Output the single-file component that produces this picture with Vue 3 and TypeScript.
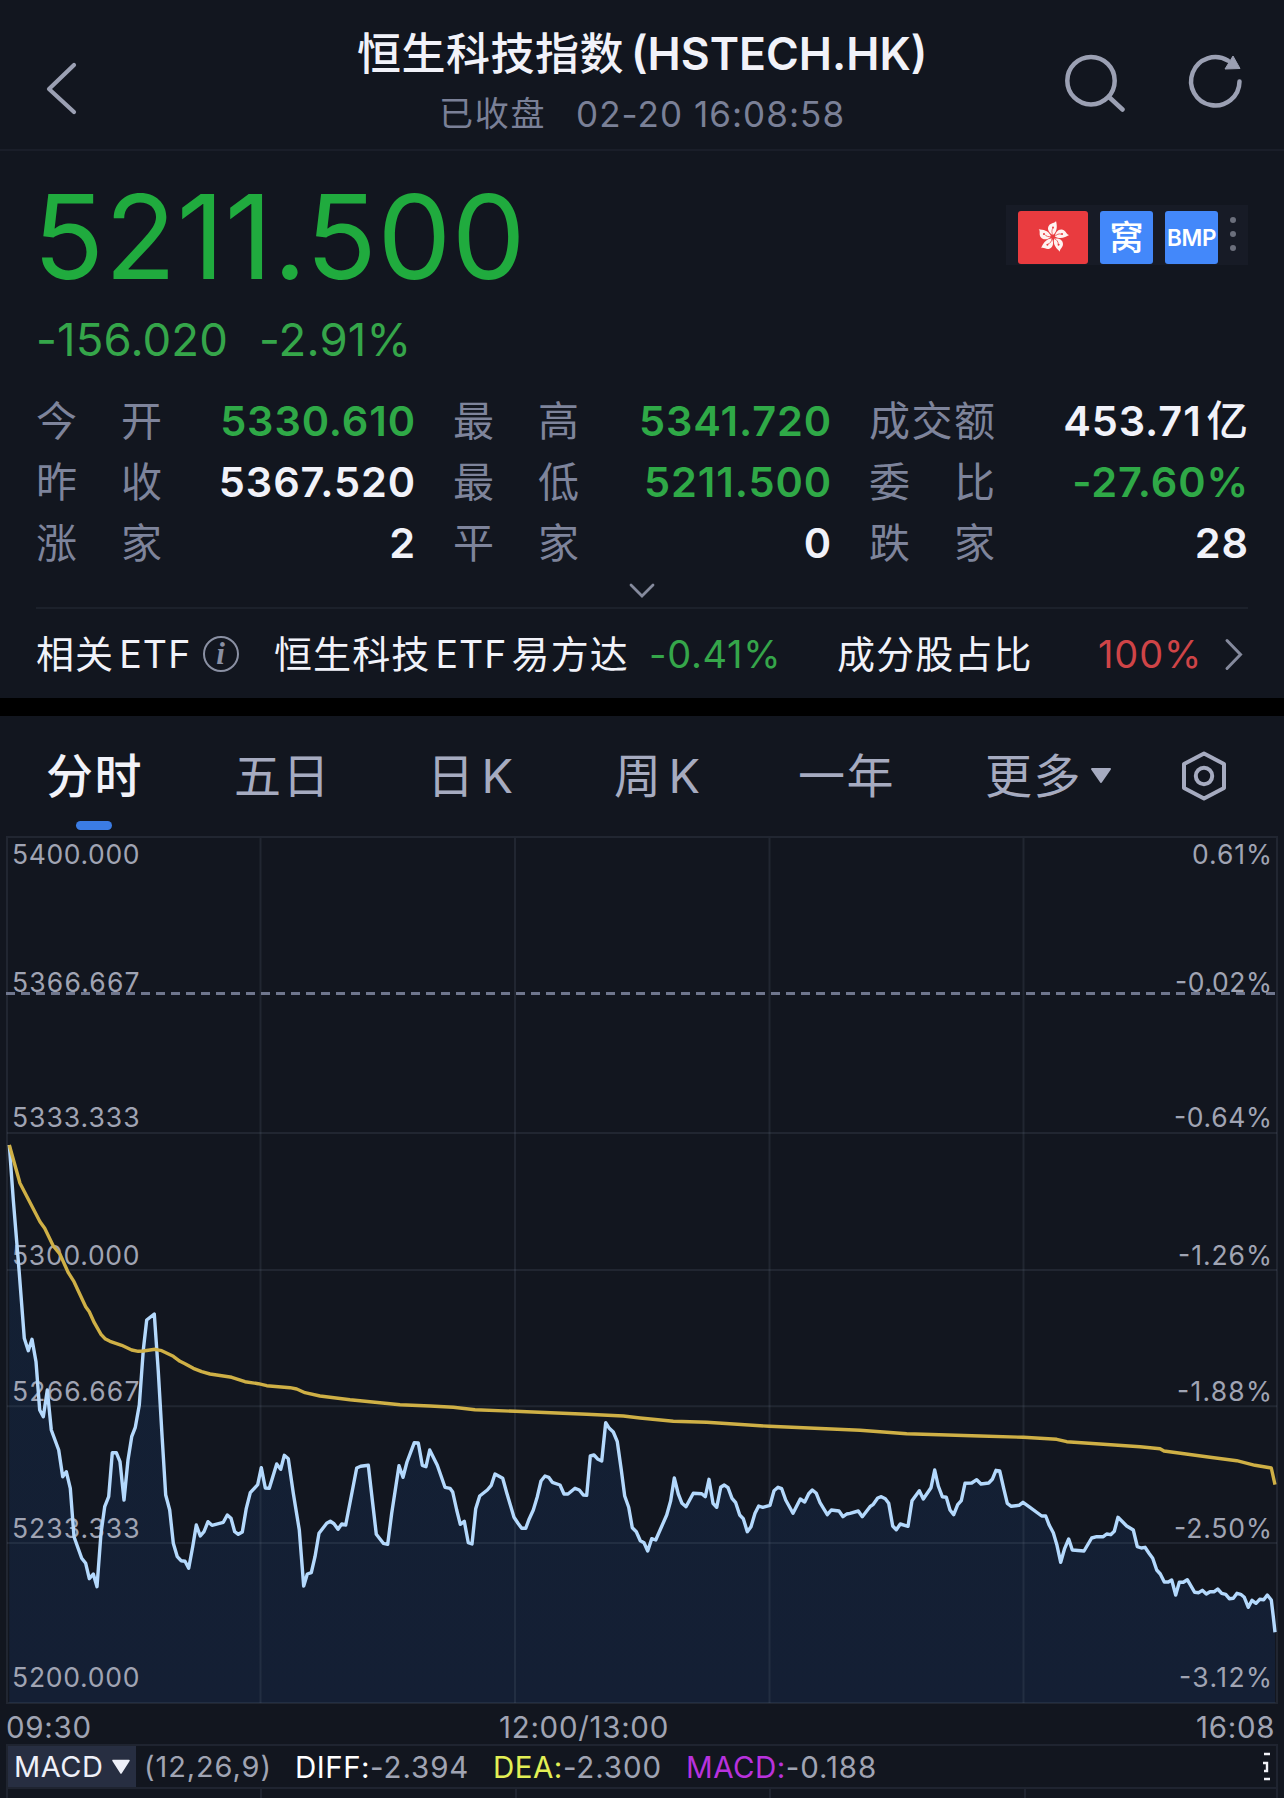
<script setup lang="ts">
interface Stat {
  label: string
  value: string
  unit?: string
  tone: 'down' | 'flat'
}

const stats: Stat[] = [
  { label: '今开', value: '5330.610', tone: 'down' },
  { label: '最高', value: '5341.720', tone: 'down' },
  { label: '成交额', value: '453.71', unit: '亿', tone: 'flat' },
  { label: '昨收', value: '5367.520', tone: 'flat' },
  { label: '最低', value: '5211.500', tone: 'down' },
  { label: '委比', value: '-27.60%', tone: 'down' },
  { label: '涨家', value: '2', tone: 'flat' },
  { label: '平家', value: '0', tone: 'flat' },
  { label: '跌家', value: '28', tone: 'flat' },
]

interface AxisLabel {
  y: number
  price: string
  percent: string
  percentWidth: number
}

const axis: AxisLabel[] = [
  { y: 864.3, price: '5400.000', percent: '0.61%', percentWidth: 80 },
  { y: 991.5, price: '5366.667', percent: '-0.02%', percentWidth: 97 },
  { y: 1127.3, price: '5333.333', percent: '-0.64%', percentWidth: 98 },
  { y: 1264.5, price: '5300.000', percent: '-1.26%', percentWidth: 94 },
  { y: 1400.5, price: '5266.667', percent: '-1.88%', percentWidth: 95 },
  { y: 1537.5, price: '5233.333', percent: '-2.50%', percentWidth: 98 },
  { y: 1687.3, price: '5200.000', percent: '-3.12%', percentWidth: 93 },
]

const columns: number[] = [260.5, 515, 769.5, 1023.5]
const rows: number[] = [1133, 1270, 1406.3, 1543]

const priceLine =
  '9.3,1145 13.3,1200 19.3,1273.3 24.3,1338.3 28.3,1350.7 32,1339.3 36,1361.7 39.7,1410 43.3,1416.7 47.3,1390 ' +
  '51.3,1430 58.7,1450 62.7,1476.7 66.3,1471.7 70.3,1488.3 74,1536.7 81.7,1558.3 85.7,1563.3 89.3,1578.7 93.3,1574 ' +
  '97,1586.7 101,1533.3 104.7,1506.7 108.7,1496.7 112.3,1452.7 116.3,1452.7 120,1461.7 124,1500 128,1460 131.7,1436.7 ' +
  '135.3,1427.3 139.3,1405 143.3,1350 146.7,1320 154.3,1314 158.3,1371.7 162,1435 165.7,1495 169.7,1510 173.3,1543.3 ' +
  '177.3,1556.7 181,1560.7 185,1561.3 188.7,1568.3 192.7,1546.7 196.3,1525 200.3,1536 204,1531.7 208,1521.7 212,1525.3 ' +
  '223.3,1522.3 227.3,1515 231,1518.3 234.7,1531.7 238.3,1534.3 242.3,1532 246.3,1508.3 250.3,1492.7 257.7,1484.7 ' +
  '261.3,1467.7 265.3,1488 269.3,1488.3 276.7,1464 280.7,1469.3 284.3,1455.3 288.3,1458.7 293.3,1493.3 299.3,1530 ' +
  '303.7,1586 307.3,1574 311.3,1572.7 315,1556.7 319,1533.3 326.7,1523.3 330.3,1521.3 334,1523.7 338,1529.3 341.7,1524 ' +
  '345.7,1525 356.7,1468 360.7,1466.3 368.3,1465.3 372.3,1500 376.3,1534.3 383.3,1543.3 387.7,1544.3 391.7,1513.3 ' +
  '399,1465.7 403,1477.3 407,1462 414.3,1442.7 418.3,1443 422.3,1465.3 426,1466.7 429.7,1450 437.3,1465.3 445,1487.3 ' +
  '450,1488.3 452.7,1492 456.7,1510 460.3,1524.3 464.3,1521.3 468.3,1542.7 472,1544 475.7,1508.7 479.7,1496 487.3,1490 ' +
  '491.3,1485.3 495,1474 502.7,1478.3 506.7,1492.7 514,1517.3 518,1523.3 521.7,1528.3 525.7,1528.3 529.3,1518.7 ' +
  '533.3,1510 537.3,1496.7 541,1481 545,1476 548.7,1477.3 552.3,1482.3 560,1485 564,1494 568,1494 575,1488.3 ' +
  '579.3,1490 583.3,1495 586.7,1495.3 590.3,1456 594,1455 598,1459.3 601.7,1461 605.7,1422.7 609.3,1428.3 613.3,1432 ' +
  '617.3,1441.7 621.3,1470 624.7,1496 628.7,1507.3 632.3,1527.7 636.3,1531.7 640.3,1540.7 644,1542.7 647.7,1551 ' +
  '651.7,1538.7 655.7,1540 666.7,1515 670.7,1500.7 674.3,1478 678.3,1494 682,1503.3 686,1506.7 693.3,1493.3 ' +
  '701.7,1493.7 705.3,1496.7 709,1479.3 713,1503.3 716.7,1507.3 720.7,1487.3 724.3,1485 728,1487.7 732,1498.3 ' +
  '735.7,1502.7 739.7,1515 743.3,1518.7 747.3,1531.7 751,1526.7 755,1513.3 758.7,1506 762.7,1507.3 770,1505.3 ' +
  '774,1490.7 778,1487.3 781.7,1488.7 785.7,1500 793,1513.3 800.3,1499 804.7,1502 808.7,1493.7 812.3,1490 816.3,1493.3 ' +
  '820,1502.7 827.3,1514.7 831.3,1510 839,1511 843,1516.7 846.7,1514 850,1513.3 858.3,1511 862.3,1516.7 870,1506.7 ' +
  '873.3,1504.3 877.7,1498 881.3,1496.7 885.3,1498.7 888.7,1503.3 892.7,1526 896.3,1529.7 900.3,1524 908,1526.3 ' +
  '912,1500.7 919.3,1490.7 923.3,1499 931,1487.7 934.7,1470 938.3,1486 942.3,1496.7 946.3,1497.3 950,1510 953.7,1514.7 ' +
  '957.7,1504.7 961.3,1500.7 965,1483.3 971.7,1483 976.7,1479.7 981,1484 988.7,1483 992.3,1479.3 996,1470.3 999.7,1471 ' +
  '1003.7,1488.3 1007.3,1503.3 1011.3,1506.3 1019,1505.3 1023,1502.3 1030,1507.3 1041.7,1516 1045.7,1516 1049.3,1525.3 ' +
  '1053.3,1532.7 1057,1545.3 1060.7,1562.3 1064.7,1548.3 1068.7,1539 1072.3,1550 1084,1551 1091.7,1538 1096.7,1536.7 ' +
  '1103.3,1536.7 1106.7,1534 1110.7,1534.7 1114.3,1531.3 1118,1517.3 1126.7,1526 1133.3,1530 1137.3,1546.7 1141.3,1548 ' +
  '1145,1547.3 1149,1553.3 1152.7,1558.3 1156.7,1570 1160.3,1574 1164.3,1582 1168.3,1582 1171.7,1580 1175.7,1595 ' +
  '1179.3,1582.3 1183.3,1582.3 1187.3,1579.7 1194.7,1592.3 1198.7,1592.7 1202.3,1590.3 1206.3,1594 1210,1591.7 ' +
  '1214.3,1591.7 1217.7,1589 1221.7,1593.3 1225.7,1594.3 1229.3,1598.7 1233.3,1598.3 1237,1593.3 1240.7,1594.3 ' +
  '1244.3,1597.3 1248.3,1607.3 1252,1600.3 1256,1603.3 1259.7,1599.3 1263.7,1599.7 1267.3,1595 1271.3,1600 ' +
  '1273.3,1616.7 1275,1632.3'

const averageLine =
  '9.3,1145 20,1183.3 40,1221.7 44.7,1228.3 53.3,1246 60,1254.3 68.3,1272.7 74,1281.7 85.7,1306.7 89.3,1311.7 ' +
  '94.3,1322.7 101,1334.3 105,1338.7 110,1341.3 121.7,1345.3 131.7,1350 138.3,1351.3 143.3,1351 155,1349.3 ' +
  '161.7,1350.7 173.3,1356.3 180,1361.3 185,1363.7 193.3,1368.3 201.7,1371.7 210,1374 231.7,1377.3 245,1381.7 ' +
  '258.3,1383.7 266.7,1385.7 290,1387.7 296.7,1389 305,1392.7 320,1396 350,1399.7 400,1404.7 430,1406 453.3,1407.3 ' +
  '475,1409.7 515,1411.3 586.7,1414.3 623.3,1416 640,1418 673.3,1421.3 706.7,1422.3 769.3,1426.3 860,1430.3 ' +
  '906.7,1433.7 980,1436 1023.3,1437.3 1056.7,1439.3 1066.7,1441.7 1140,1446.7 1160,1448.7 1164,1451 1210,1457.3 ' +
  '1236.7,1460.7 1255,1465.3 1271.3,1468 1275,1484.7'

const areaPoints = `${priceLine} 1275,1703 9.3,1703`
const petals: number[] = [0, 72, 144, 216, 288]
</script>

<template>
  <main class="app">
    <header class="topbar">
      <svg class="back" width="34" height="56" viewBox="0 0 34 56" fill="none">
        <path d="M29 4 4 28 29 51" stroke="#9ba0b3" stroke-width="4.200" stroke-linecap="round" stroke-linejoin="round" />
      </svg>
      <div class="heading">
        <h1><span class="name">恒生科技指数</span><span class="code">(HSTECH.HK)</span></h1>
        <p><span class="state">已收盘</span><span class="stamp">02-20 16:08:58</span></p>
      </div>
      <svg class="search" width="64" height="60" viewBox="1062 52 64 60" fill="none" stroke="#9ba0b3" stroke-width="4.500" stroke-linecap="round">
        <circle cx="1091" cy="80.700" r="23.700" />
        <path d="M1109 97l13.500 12.500" />
      </svg>
      <svg class="refresh" width="60" height="60" viewBox="1186 52 60 60" fill="none">
        <path d="M1239.500 81.500a24.200 24.200 0 1 1-11.500-20.800" stroke="#9ba0b3" stroke-width="4.500" stroke-linecap="round" />
        <path d="M1233 56l7 12.500-15 .5z" fill="#9ba0b3" stroke="#9ba0b3" stroke-linejoin="round" />
      </svg>
    </header>

    <section class="summary">
      <div class="quote">
        <div class="last">5211.500</div>
        <div class="badges">
          <span class="badge flag">
            <svg width="36" height="36" viewBox="-18 -18 36 36">
              <g v-for="angle in petals" :key="angle" :transform="`rotate(${angle})`">
                <path d="M0-2C-4-4-6.500-8-4-11.500-2-14.500 2-13.500 3-16 4-12 5-6 0-2Z" fill="#fff3f1" />
                <path d="M0-2C-1.500-4-1.500-7 0-9" stroke="#e93b3f" stroke-width=".7" fill="none" />
                <circle cx="0" cy="-9.500" r="1" fill="#e93b3f" />
              </g>
            </svg>
          </span>
          <span class="badge nest">窝</span>
          <span class="badge bmp">BMP</span>
          <span class="dots"><i></i><i></i><i></i></span>
        </div>
      </div>
      <div class="change"><span class="delta">-156.020</span><span class="rate">-2.91%</span></div>
      <dl class="stats">
        <div v-for="s in stats" :key="s.label" class="stat">
          <dt><span v-for="c in s.label" :key="c">{{ c }}</span></dt>
          <dd :class="s.tone">{{ s.value }}<span v-if="s.unit" class="unit">{{ s.unit }}</span></dd>
        </div>
      </dl>
      <div class="expand">
        <svg width="30" height="18" viewBox="0 0 30 18" fill="none"><path d="M4 3l11 11L26 3" stroke="#858a9d" stroke-width="2.800" stroke-linecap="round" /></svg>
      </div>
      <div class="etf">
        <span class="etf-title">相关<b>ETF</b></span>
        <span class="info">i</span>
        <span class="etf-name">恒生科技<b>ETF</b>易方达</span>
        <span class="etf-rate">-0.41%</span>
        <span class="share">成分股占比</span>
        <span class="share-rate">100%</span>
        <svg class="next" width="20" height="34" viewBox="0 0 20 34" fill="none"><path d="M3 3.500 16.500 17.500 3 31.500" stroke="#858a9d" stroke-width="3" stroke-linecap="round" /></svg>
      </div>
    </section>

    <nav class="tabs">
      <span class="tab active">分时</span>
      <span class="tab">五日</span>
      <span class="tab">日<b>K</b></span>
      <span class="tab">周<b>K</b></span>
      <span class="tab">一年</span>
      <span class="tab">更多</span>
      <svg class="caret" width="22" height="18" viewBox="0 0 22 18"><path d="M2 2h18L11 15z" fill="#a6abc0" stroke="#a6abc0" stroke-width="2" stroke-linejoin="round" /></svg>
      <svg class="settings" width="48" height="52" viewBox="-24 -26 48 52" fill="none" stroke="#a6abc0" stroke-width="4" stroke-linejoin="round">
        <path d="M0-22.500 20-12V12L0 22.500-20 12V-12z" />
        <circle r="8.200" />
      </svg>
    </nav>

    <svg class="chart" width="1284" height="874" viewBox="0 832 1284 874">
      <defs>
        <linearGradient id="area" x1="0" y1="0" x2="0" y2="1">
          <stop offset="0" stop-color="#132033" />
          <stop offset="1" stop-color="#141f34" />
        </linearGradient>
      </defs>
      <polygon :points="areaPoints" fill="url(#area)" />
      <g stroke="#737b92" stroke-opacity=".16" stroke-width="2" fill="none">
        <rect x="7" y="837" width="1270" height="866" />
        <line v-for="x in columns" :key="x" :x1="x" :x2="x" y1="838" y2="1703" />
        <line v-for="y in rows" :key="y" x1="7" x2="1277" :y1="y" :y2="y" />
      </g>
      <line x1="6" x2="1277" y1="993.500" y2="993.500" stroke="#6f768d" stroke-width="3" stroke-dasharray="9 6" />
      <g class="axis">
        <template v-for="a in axis" :key="a.y">
          <text x="12" :y="a.y" textLength="127.500">{{ a.price }}</text>
          <text :x="1272 - a.percentWidth" :y="a.y" :textLength="a.percentWidth">{{ a.percent }}</text>
        </template>
      </g>
      <polyline :points="priceLine" fill="none" stroke="#b4d9fd" stroke-width="3.400" stroke-linejoin="round" />
      <polyline :points="averageLine" fill="none" stroke="#cfb046" stroke-width="3.400" stroke-linejoin="round" />
    </svg>

    <div class="times"><span class="open">09:30</span><span class="noon">12:00/13:00</span><span>16:08</span></div>

    <div class="macd">
      <span class="picker">MACD<svg width="20" height="16" viewBox="0 0 20 16"><path d="M2 1.500h16L10 14z" fill="#eef0f8" stroke="#eef0f8" stroke-width="1.500" stroke-linejoin="round" /></svg></span>
      <span class="params">(12,26,9)</span>
      <span class="diff"><em>DIFF:</em>-2.394</span>
      <span class="dea"><em>DEA:</em>-2.300</span>
      <span class="bar"><em>MACD:</em>-0.188</span>
      <svg class="edge" width="8" height="30" viewBox="0 0 8 30"><path d="M1 2h6M0 11h4v8H1M1 27h6" stroke="#f2f3f8" stroke-width="2.400" fill="none" /></svg>
    </div>
    <div class="subchart"><i></i><i></i><i></i><i></i><i></i></div>
  </main>
</template>

<style>
html,
body {
  margin: 0;
  background: #12161f;
}
</style>

<style scoped>
.app {
  width: 1284px;
  height: 1798px;
  overflow: hidden;
  background: #12161f;
  color: #f1f2f9;
  font-family: Inter, 'Noto Sans CJK SC', sans-serif;
  white-space: nowrap;
}
svg {
  display: block;
  flex: none;
}
b,
em {
  font-weight: inherit;
  font-style: normal;
}

.topbar {
  display: flex;
  box-sizing: border-box;
  height: 151px;
  border-bottom: 2px solid #1a1e29;
}
.back {
  margin: 61px 0 0 45px;
}
.heading {
  width: 720px;
  padding-left: 278px;
}
.heading h1,
.heading p {
  display: flex;
  margin: 0;
}
.heading h1 {
  height: 63px;
  margin-top: 24px;
  line-height: 61px;
  font-size: 45px;
  font-weight: 500;
}
.name {
  width: 274px;
  font-size: 44px;
  letter-spacing: 0.5px;
}
.code {
  font-weight: 600;
  font-size: 44.5px;
}
.heading p {
  padding-left: 82px;
  line-height: 54px;
  font-size: 35px;
  color: #7a8097;
}
.state {
  width: 137px;
  font-size: 34px;
  letter-spacing: 1.8px;
}
.stamp {
  letter-spacing: 1.05px;
}
.search {
  margin: 52px 0 0 -15px;
}
.refresh {
  margin: 52px 0 0 60px;
}

.summary {
  height: 547px;
  border-bottom: 18px solid #000;
}
.quote {
  display: flex;
  justify-content: space-between;
  height: 150px;
  padding: 0 36px 0 33px;
}
.last {
  margin-top: 15px;
  line-height: 141px;
  font-size: 117px;
  color: #20ab3e;
  letter-spacing: 0.6px;
}
.badges {
  display: flex;
  align-items: center;
  box-sizing: border-box;
  width: 242px;
  height: 60px;
  margin-top: 54px;
  padding: 4px 0 0 12px;
  background: #171b26;
}
.badge {
  display: flex;
  align-items: center;
  justify-content: center;
  width: 53px;
  height: 53px;
  margin-right: 12px;
  border-radius: 3px;
  background: #4388fa;
  color: #fff;
}
.badge.flag {
  width: 70px;
  background: #e93b3f;
}
.nest {
  font-size: 34px;
  font-weight: 500;
  line-height: 53px;
  align-items: flex-start;
}
.badge.bmp {
  font-size: 22.5px;
  font-weight: 600;
  letter-spacing: -0.3px;
}
.dots {
  display: flex;
  flex-direction: column;
  gap: 8px;
  margin-bottom: 7px;
}
.dots i {
  width: 6px;
  height: 6px;
  border-radius: 3px;
  background: #6b6f7c;
}
.change {
  display: flex;
  height: 90px;
  padding-left: 36px;
  line-height: 78px;
  font-size: 45.5px;
  letter-spacing: 0.15px;
  color: #35a64a;
}
.delta {
  width: 223px;
}

.stats {
  display: grid;
  grid-template-columns: 378px 377px 378px;
  column-gap: 39px;
  grid-auto-rows: 61px;
  height: 183px;
  margin: 0 0 0 36px;
}
.stat {
  display: flex;
  justify-content: space-between;
  line-height: 61px;
}
dt {
  display: flex;
  justify-content: space-between;
  width: 126px;
  font-size: 41px;
  color: #7e849b;
}
dd {
  margin: 0 -2px 0 0;
  font-size: 41.5px;
  font-weight: 600;
  letter-spacing: 0.9px;
}
.unit {
  margin-left: 5px;
  font-weight: 500;
}
.down {
  color: #2fa947;
}
.expand {
  display: flex;
  justify-content: center;
  height: 18px;
  padding-top: 8px;
}
.etf {
  display: flex;
  align-items: center;
  height: 90px;
  margin: 7px 36px 0;
  border-top: 2px solid #1c212b;
  line-height: 86px;
  font-size: 38px;
  letter-spacing: 1.1px;
}
.etf b {
  margin: 0 4px 0 5px;
  font-size: 37.5px;
}
.etf-title {
  width: 167px;
}
.info {
  box-sizing: border-box;
  width: 36px;
  height: 36px;
  margin-right: 35px;
  border: 2px solid #8a90a3;
  border-radius: 50%;
  font: italic bold 31px/31px 'Liberation Serif', serif;
  text-align: center;
  color: #8a90a3;
}
.etf-name {
  width: 375px;
}
.etf-rate {
  width: 188px;
  letter-spacing: 0.7px;
  color: #35a64a;
}
.share {
  width: 261px;
}
.share-rate {
  width: 126px;
  letter-spacing: 0.9px;
  color: #cf4447;
}

.tabs {
  display: flex;
  height: 116px;
  box-sizing: border-box;
  padding-left: 46px;
  line-height: 120px;
  font-size: 47px;
  color: #a6abc0;
}
.tab {
  position: relative;
  width: 187px;
  letter-spacing: 1.5px;
}
.tab b {
  margin-left: 6px;
}
.active {
  width: 188px;
  color: #f1f2f9;
  font-weight: 500;
}
.active::after {
  content: '';
  position: absolute;
  left: 30px;
  top: 105px;
  width: 36px;
  height: 9px;
  border-radius: 4.5px;
  background: #3b7ce4;
}
.tab:nth-child(2) {
  width: 193px;
}
.tab:nth-child(4) {
  width: 184px;
}
.tab:nth-child(6) {
  width: 105px;
}
.caret {
  margin-top: 51px;
}
.settings {
  margin: 34px 0 0 68px;
}

.axis {
  font-size: 26.5px;
  fill: #a0a4b3;
}
.times {
  display: flex;
  height: 38px;
  padding-left: 6px;
  line-height: 42px;
  font-size: 29.5px;
  letter-spacing: 0.7px;
  color: #a0a4b3;
}
.open {
  width: 493px;
}
.noon {
  width: 697px;
}
.macd {
  display: flex;
  box-sizing: border-box;
  width: 1272px;
  height: 45px;
  margin-left: 6px;
  border: 2px solid #1f2430;
  line-height: 42px;
  font-size: 29.5px;
  letter-spacing: 0.9px;
  color: #a0a4b3;
}
.picker {
  display: flex;
  align-items: center;
  box-sizing: border-box;
  gap: 8px;
  width: 128px;
  padding-left: 6px;
  background: #272e41;
  font-size: 29px;
  letter-spacing: 0.5px;
  color: #eef0f8;
}
.params {
  box-sizing: border-box;
  width: 159px;
  padding-left: 8px;
  font-size: 29px;
}
.diff {
  width: 198px;
}
.diff em {
  color: #fff;
}
.dea {
  width: 193px;
}
.dea em {
  color: #e2ef55;
}
.bar {
  width: 577px;
}
em {
  letter-spacing: 0.5px;
}
.bar em {
  color: #b832dd;
}
.edge {
  margin-top: 6px;
}
.subchart {
  display: flex;
  height: 12px;
  margin-left: 6px;
}
.subchart i {
  box-sizing: border-box;
  width: 254.4px;
  border-left: 2px solid #1f2430;
}
.subchart i:last-child {
  border-right: 2px solid #1f2430;
}
</style>
